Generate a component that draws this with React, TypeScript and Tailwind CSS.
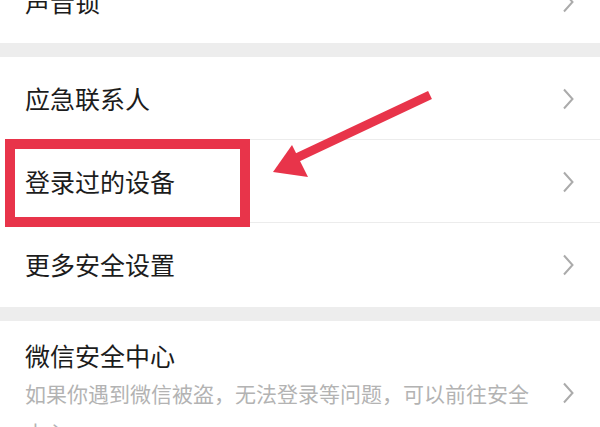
import React from "react";

const FONT = { fontFamily: '"Noto Sans CJK SC", "Noto Sans", sans-serif' };

function Chevron() {
  return (
    <svg width="12" height="22" viewBox="0 0 12 22" className="shrink-0">
      <path d="M2 1.5 L10.5 11 L2 20.5" fill="none" stroke="#ababab" strokeWidth="2" />
    </svg>
  );
}

function Row({ label, last }: { label: string; last?: boolean }) {
  return (
    <div className="relative flex h-[83px] items-center justify-between pl-[25px] pr-[26px]">
      <span className="text-[25px] leading-none text-[#1c1c1c]">{label}</span>
      <Chevron />
      {!last && <div className="absolute bottom-0 left-[25px] right-0 h-px bg-[#ececec]" />}
    </div>
  );
}

export default function App() {
  return (
    <div className="relative h-[427px] w-[600px] overflow-hidden bg-white" style={FONT}>
      <div className="-mt-[40px]">
        <Row label="声音锁" last />
      </div>
      <div className="h-[14px] bg-[#ededed]" />
      <Row label="应急联系人" />
      <Row label="登录过的设备" />
      <div className="h-[84px]">
        <Row label="更多安全设置" last />
      </div>
      <div className="h-[14px] bg-[#ededed]" />
      <div className="pl-[25px] pr-[26px] pt-[17px]">
        <div className="text-[25px] leading-[34px] text-[#1c1c1c]">微信安全中心</div>
        <div className="mt-[2px] flex items-start justify-between">
          <p className="w-[510px] text-[21px] leading-[39px] text-[#b3b3b3]">
            如果你遇到微信被盗，无法登录等问题，可以前往安全中心
          </p>
          <div className="mt-[8px]">
            <Chevron />
          </div>
        </div>
      </div>

      <div className="absolute left-[5px] top-[139px] h-[88px] w-[245px] border-[10px] border-[#e8344a]" />
      <svg className="absolute left-0 top-0" width="600" height="427" viewBox="0 0 600 427">
        <line x1="430" y1="95" x2="292" y2="160" stroke="#e8344a" strokeWidth="9" />
        <polygon points="273,172 292,145 308,177" fill="#e8344a" />
      </svg>
    </div>
  );
}
